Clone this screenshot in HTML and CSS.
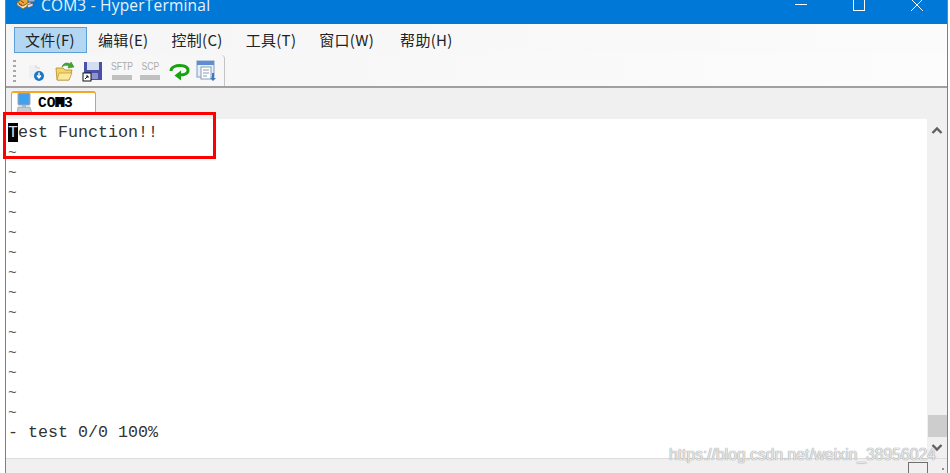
FILE: index.html
```html
<!DOCTYPE html>
<html lang="zh">
<head>
<meta charset="utf-8">
<title>COM3 - HyperTerminal</title>
<link rel="stylesheet" href="styles.css">
</head>
<body>
<div class="window">
  <header class="titlebar">
    <svg class="app-icon" width="20" height="16" viewBox="0 0 20 16">
      <path d="M1 6l8-4 6 3-8 5z" fill="#e8a93a" stroke="#8a5a1a" stroke-width=".8"/>
      <path d="M1 6v3l6 4 8-5V5l-8 5z" fill="#f4e3b0" stroke="#8a5a1a" stroke-width=".8"/>
      <path d="M3 8l3 2M5 5l3 2" stroke="#a33" stroke-width="1"/>
      <rect x="12" y="0" width="7" height="6" fill="#8fb6e6" stroke="#35507f" stroke-width=".8"/>
      <path d="M11 9l6-2v3l-5 2z" fill="#d9d9e6" stroke="#556" stroke-width=".7"/>
    </svg>
    <span class="title-text">COM3 - HyperTerminal</span>
    <div class="win-controls">
      <span class="win-btn"><svg width="12" height="12" viewBox="0 0 12 12"><path d="M0 4.500h12" stroke="#fff"/></svg></span>
      <span class="win-btn"><svg width="12" height="12" viewBox="0 0 12 12"><rect x=".5" y="-4.500" width="11" height="15" fill="none" stroke="#fff"/></svg></span>
      <span class="win-btn"><svg width="14" height="14" viewBox="0 0 14 14"><path d="M1 -1l12 12M13 -1L1 11" stroke="#fff"/></svg></span>
    </div>
  </header>

  <nav class="menubar">
    <span class="menu-item is-active">文件(F)</span>
    <span class="menu-item">编辑(E)</span>
    <span class="menu-item">控制(C)</span>
    <span class="menu-item">工具(T)</span>
    <span class="menu-item menu-item-wide">窗口(W)</span>
    <span class="menu-item">帮助(H)</span>
  </nav>

  <div class="toolbar-row">
    <div class="toolbar">
      <span class="grip"></span>
      <span class="tool">
        <svg width="22" height="22" viewBox="0 0 22 22">
          <path d="M4 5h7l4 3v10H4z" fill="#eef0f2"/>
          <path d="M11 5v3h4" fill="none" stroke="#d5d8db"/>
          <circle cx="14" cy="16" r="5" fill="#1c78c4"/>
          <path d="M14 12.500v5M12 15.500l2 2.500 2-2.500" stroke="#fff" stroke-width="1.400" fill="none"/>
        </svg>
      </span>
      <span class="tool">
        <svg width="22" height="22" viewBox="0 0 22 22">
          <path d="M2 8h7l2 2h7l-3 10H3z" fill="#f3d66b" stroke="#b08a24" stroke-width=".8"/>
          <path d="M5 13h13l-3 7H3z" fill="#fbe89a" stroke="#b08a24" stroke-width=".6"/>
          <path d="M8 7c1-4 5-5 8-3l1-2 3 5-6 1 1-2c-2-1-5-1-7 1z" fill="#3ea52f" stroke="#2a7d1e" stroke-width=".5"/>
        </svg>
      </span>
      <span class="tool">
        <svg width="22" height="22" viewBox="0 0 22 22">
          <rect x="2" y="2" width="18" height="18" fill="#4a4fa8"/>
          <rect x="5" y="2" width="12" height="8" fill="#d5def0"/>
          <rect x="8" y="13" width="8" height="6" fill="#8f94cf"/>
          <rect x="1" y="13" width="8" height="8" fill="#fff" stroke="#111"/>
          <path d="M3 19l3-3M4 16h2v2" stroke="#111" fill="none"/>
        </svg>
      </span>
      <span class="tool"><span class="tool-text">SFTP</span><span class="tool-bar"></span></span>
      <span class="tool"><span class="tool-text">SCP</span><span class="tool-bar"></span></span>
      <span class="tool">
        <svg width="22" height="22" viewBox="0 0 22 22">
          <path d="M3 11C3 7 8 5.500 12 5.500c5 0 8 2 8 5 0 3-4 4.500-8 4.500" fill="none" stroke="#16a30f" stroke-width="3"/>
          <path d="M13 10.500L6.500 15.500 13 20.500z" fill="#16a30f"/>
        </svg>
      </span>
      <span class="tool">
        <svg width="22" height="22" viewBox="0 0 22 22">
          <rect x="1" y="1" width="17" height="16" fill="#e8eef7" stroke="#7e9cc6"/>
          <rect x="1" y="1" width="17" height="4" fill="#5b8fd0"/>
          <rect x="5" y="7" width="10" height="12" fill="#fff" stroke="#8a9bb5"/>
          <path d="M7 10h6M7 13h6M7 16h4" stroke="#8a9bb5"/>
          <path d="M18 13v5h2l-3 3-3-3h2v-5z" fill="#3f78c0"/>
        </svg>
      </span>
    </div>
  </div>

  <div class="tabbar">
    <div class="tab">
      <svg width="17" height="20" viewBox="0 0 17 20">
        <rect x="2" y="0" width="12" height="12" rx="1" fill="#4f9fe8" stroke="#9aa7b5"/>
        <rect x="4" y="2" width="8" height="8" fill="#3ea0f0"/>
        <path d="M1 20l1-6h12l2 6z" fill="#c4cbd3" stroke="#8a94a0" stroke-width=".6"/>
        <rect x="6" y="12" width="4" height="3" fill="#aeb6bf"/>
      </svg>
      <span class="tab-label">CO<span class="tab-m">M</span>3</span>
    </div>
  </div>

  <main class="content">
    <div class="terminal">
      <div class="term-line"><span class="cursor">T</span>est Function!!</div>
      <div class="term-line tilde">~</div>
      <div class="term-line tilde">~</div>
      <div class="term-line tilde">~</div>
      <div class="term-line tilde">~</div>
      <div class="term-line tilde">~</div>
      <div class="term-line tilde">~</div>
      <div class="term-line tilde">~</div>
      <div class="term-line tilde">~</div>
      <div class="term-line tilde">~</div>
      <div class="term-line tilde">~</div>
      <div class="term-line tilde">~</div>
      <div class="term-line tilde">~</div>
      <div class="term-line tilde">~</div>
      <div class="term-line tilde">~</div>
      <div class="term-line">- test 0/0 100%</div>
    </div>
    <aside class="scrollbar">
      <svg class="arrow" width="12" height="9" viewBox="0 0 12 9"><path d="M1.500 7L6 2.500 10.500 7" fill="none" stroke="#606060" stroke-width="2.400"/></svg>
      <span class="thumb"></span>
      <svg class="arrow" width="12" height="9" viewBox="0 0 12 9"><path d="M1.500 2L6 6.500 10.500 2" fill="none" stroke="#606060" stroke-width="2.400"/></svg>
    </aside>
  </main>

  <footer class="statusbar">
    <span class="status-box"></span>
    <span class="status-dot"></span>
  </footer>
</div>
<div class="highlight"></div>
<div class="watermark">https://blog.csdn.net/weixin_38956024</div>
</body>
</html>
```
FILE: styles.css
```css
* { box-sizing: border-box; }
html, body { margin: 0; height: 100%; overflow: hidden; background: #fff; }
body { position: relative; width: 950px; height: 473px; padding: 0 2px 0 5px; }

.window {
  height: 473px;
  display: flex;
  flex-direction: column;
  background: #f0f0f0;
  border-left: 1px solid #3d8fd8;
  border-right: 1px solid #3d8fd8;
  overflow: hidden;
}

.titlebar {
  height: 24px;
  flex: none;
  display: flex;
  align-items: flex-start;
  background: #0078d7;
  color: #e8f3fc;
  overflow: hidden;
}
.app-icon { margin: -4px 0 0 10px; flex: none; }
.title-text {
  margin: -6px 0 0 5px;
  font: 15.5px/22px "Open Sans", "Liberation Sans", sans-serif;
  letter-spacing: .2px;
}
.win-controls { margin-left: auto; display: flex; padding-right: 1px; }
.win-btn { width: 58px; height: 24px; display: flex; justify-content: center; align-items: flex-start; }

.menubar {
  height: 29px;
  flex: none;
  display: flex;
  align-items: flex-end;
  padding: 0 0 0 8px;
  background: linear-gradient(90deg, #f5f5f5, #fbfbfb);
}
.menu-item {
  height: 26px;
  padding: 0 11px 0 10px;
  border: 1px solid transparent;
  font: 15px/24px "Noto Sans CJK SC", "Liberation Sans", sans-serif;
  letter-spacing: .3px;
  color: #222;
  white-space: nowrap;
}
.menu-item.is-active { background: #b3d6f2; border: 1px solid #5a9fd8; }
.menu-item-wide { padding-right: 14px; }

.toolbar-row {
  height: 35px;
  flex: none;
  background: linear-gradient(90deg, #f5f5f5, #fcfcfc);
  border-bottom: 2px solid #a0a0a0;
  padding: 2px 0 0 4px;
}
.toolbar {
  width: 215px;
  height: 31px;
  display: flex;
  align-items: center;
  border-right: 1px solid #c4c4c4;
  border-radius: 0 4px 0 0;
  background: #f7f7f7;
}
.grip {
  width: 3px;
  height: 22px;
  flex: none;
  margin: 0 6px 0 3px;
  background: repeating-linear-gradient(#a8a8a8 0 2px, transparent 2px 5px);
}
.tool {
  width: 28.5px;
  height: 24px;
  flex: none;
  display: flex;
  flex-direction: column;
  align-items: center;
  justify-content: center;
}
.tool-text {
  font: 11px/11px "Liberation Sans", sans-serif;
  color: #aaa;
  transform: scaleX(.78);
}
.tool-bar { width: 20px; height: 5px; margin-top: 3px; background: #c0c0c0; }

.tabbar { height: 31px; flex: none; padding: 3px 0 0 5px; background: #f0f0f0; }
.tab {
  width: 85px;
  height: 22px;
  display: flex;
  align-items: center;
  gap: 5px;
  padding: 0 0 0 4px;
  background: #fff;
  border: 1px solid #a8a8a8;
  border-top: 2px solid #f5a623;
  border-radius: 3px 3px 0 0;
}
.tab-label { font: 700 14.5px/18px "Liberation Mono", monospace; color: #000; }
.tab-m { text-shadow: 1px 0 #000, -1px 0 #000; }

.content { height: 339px; flex: none; display: flex; }
.terminal {
  flex: 1;
  padding: 4px 0 0 2px;
  background: #fff;
  color: #333;
  font: 16.67px/20px "Liberation Mono", "Courier New", monospace;
}
.term-line { height: 20px; white-space: pre; }
.term-line.tilde { font-size: 14.5px; color: #555; }
.cursor { background: #000; color: #ddd; }

.scrollbar {
  width: 20px;
  flex: none;
  display: flex;
  flex-direction: column;
  align-items: center;
  background: #f0f0f0;
  padding: 7px 0 6px;
}
.thumb { width: 19px; height: 22px; margin-top: auto; background: #cdcdcd; }
.scrollbar .arrow:last-child { margin-top: 6px; }

.statusbar {
  flex: 1;
  display: flex;
  justify-content: flex-end;
  align-items: flex-end;
  padding-right: 3px;
  border-top: 1px solid #dcdcdc;
  background: #f0f0f0;
}
.status-box { width: 20px; height: 11px; margin-right: 14px; border: 1px solid #707070; border-bottom: 0; }
.status-dot { width: 2px; height: 2px; margin-bottom: 3px; background: #909090; }

.highlight {
  position: absolute;
  left: 3px;
  top: 112px;
  width: 213px;
  height: 47px;
  border: 3px solid #f00;
}
.watermark {
  position: absolute;
  left: 669px;
  top: 444px;
  font: 15.7px/22px "Liberation Sans", sans-serif;
  color: rgba(255,255,255,.75);
  text-shadow: 0 0 1px #999, 0 0 1px #999;
  white-space: nowrap;
}
```
